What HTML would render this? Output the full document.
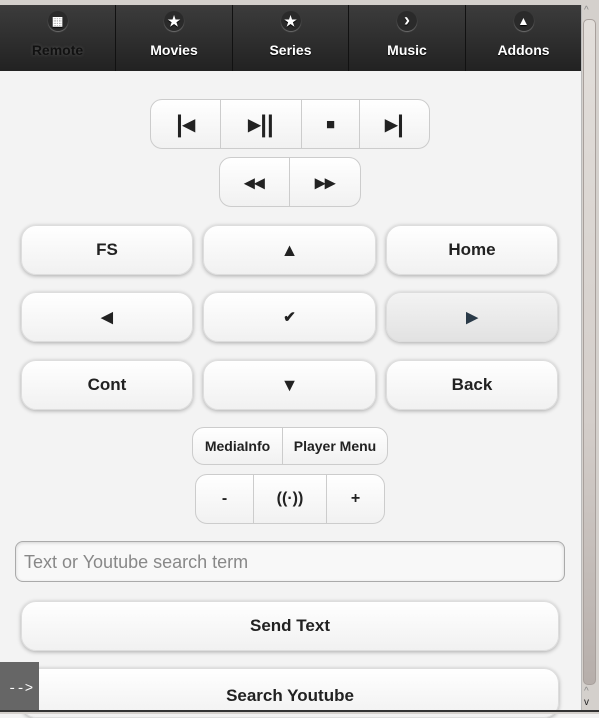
<!DOCTYPE html><html><head><style>
*{box-sizing:border-box;margin:0;padding:0}
body{width:599px;height:714px;overflow:hidden;background:#f3f3f3;font-family:"Liberation Sans",sans-serif;position:relative}
.top{position:absolute;left:0;top:0;width:599px;height:5px;background:#d4d0cc}
.hdr{position:absolute;left:0;top:5px;width:581px;height:66px;background:linear-gradient(#3c3c3c,#222);display:flex}
.tab{flex:1;border-right:1px solid #111;position:relative;color:#fff;font-weight:bold;font-size:14px;text-align:center;text-shadow:0 1px 1px #000}
.tab:last-child{border-right:none}
.tab .ic{position:absolute;left:50%;top:6px;margin-left:-10px;width:20px;height:20px;border-radius:50%;background:#2a2a2a;box-shadow:0 1px 1px rgba(255,255,255,.3);color:#fff;font-size:14px;line-height:20px}
.tab .l{position:absolute;left:0;right:0;top:37px}
.tab.act .l{color:#111;text-shadow:0 0 3px #555}
.b{position:absolute;background:linear-gradient(#fff,#f1f1f1);border:1px solid #ccc;color:#222;font-weight:bold;display:flex;align-items:center;justify-content:center}
.big{border-radius:15px;box-shadow:0 1px 4px rgba(0,0,0,.3);font-size:17px;border-color:#ddd}
.grp{position:absolute;display:flex;border:1px solid #ccc;border-radius:12px;background:linear-gradient(#fff,#f1f1f1);overflow:hidden}
.grp div{display:flex;align-items:center;justify-content:center;border-right:1px solid #ccc;font-weight:bold;color:#222}
.grp div:last-child{border-right:none}
</style></head><body>
<div class="top"></div>
<div class="hdr">
<div class="tab act" style="flex:0 0 116px"><div class="ic" style="font-size:12px">▦</div><div class="l">Remote</div></div>
<div class="tab" style="flex:0 0 117px"><div class="ic">★</div><div class="l">Movies</div></div>
<div class="tab" style="flex:0 0 116px"><div class="ic">★</div><div class="l">Series</div></div>
<div class="tab" style="flex:0 0 117px"><div class="ic" style="font-size:18px;line-height:18px">›</div><div class="l">Music</div></div>
<div class="tab"><div class="ic" style="font-size:12px">▲</div><div class="l">Addons</div></div>
</div>
<div class="grp" style="left:150px;top:99px;width:280px;height:50px;font-size:24px">
<div style="width:70px">|◂</div><div style="width:81px">▸||</div><div style="width:58px;font-size:15px">■</div><div style="flex:1">▸|</div></div>
<div class="grp" style="left:219px;top:157px;width:142px;height:50px;font-size:20px">
<div style="width:70px">◂◂</div><div style="flex:1">▸▸</div></div>
<div class="b big" style="left:21px;top:225px;width:172px;height:50px">FS</div>
<div class="b big" style="left:203px;top:225px;width:173px;height:50px;font-size:18px">▲</div>
<div class="b big" style="left:386px;top:225px;width:172px;height:50px">Home</div>
<div class="b big" style="left:21px;top:292px;width:172px;height:50px;font-size:15px">◀</div>
<div class="b big" style="left:203px;top:292px;width:173px;height:50px;font-size:15px">✔</div>
<div class="b big" style="left:386px;top:292px;width:172px;height:50px;font-size:15px;background:linear-gradient(#f3f3f3,#e2e2e2);color:#2a3a48">▶</div>
<div class="b big" style="left:21px;top:360px;width:172px;height:50px">Cont</div>
<div class="b big" style="left:203px;top:360px;width:173px;height:50px;font-size:18px">▼</div>
<div class="b big" style="left:386px;top:360px;width:172px;height:50px">Back</div>
<div class="grp" style="left:192px;top:427px;width:196px;height:38px;font-size:14px"><div style="width:90px">MediaInfo</div><div style="flex:1">Player Menu</div></div>
<div class="grp" style="left:195px;top:474px;width:190px;height:50px;font-size:16px"><div style="width:58px">-</div><div style="width:73px">((·))</div><div style="flex:1">+</div></div>
<div style="position:absolute;left:15px;top:541px;width:550px;height:41px;border:1px solid #aaa;border-radius:8px;background:#f8f8f8;box-shadow:inset 0 1px 3px rgba(0,0,0,.15);color:#888;font-size:18px;padding:10px 8px">Text or Youtube search term</div>
<div class="b big" style="left:21px;top:601px;width:538px;height:50px">Send Text</div>
<div class="b big" style="left:21px;top:668px;width:538px;height:50px;align-items:flex-start;padding-top:17px">Search Youtube</div>
<div style="position:absolute;left:0;top:662px;width:39px;height:48px;background:#666;color:#fff;font-size:14px;padding:19px 0 0 8px;font-family:'Liberation Mono',monospace">--&gt;</div>
<div style="position:absolute;left:581px;top:5px;width:18px;height:705px;background:#d4d0cc;border-left:1px solid #bbb"></div>
<div style="position:absolute;left:583px;top:19px;width:13px;height:666px;border-radius:5px;background:linear-gradient(#e2deda,#d4ceca 60%,#b6aeaa);border:1px solid #a8a09c"></div>
<div style="position:absolute;left:584px;top:5px;font-size:10px;color:#888">^</div>
<div style="position:absolute;left:584px;top:686px;font-size:10px;color:#888">^</div>
<div style="position:absolute;left:584px;top:697px;font-size:10px;color:#222">v</div>
<div style="position:absolute;left:0;top:710px;width:599px;height:2px;background:#333"></div>
<div style="position:absolute;left:0;top:712px;width:599px;height:2px;background:#d4d0cc"></div>
</body></html>
